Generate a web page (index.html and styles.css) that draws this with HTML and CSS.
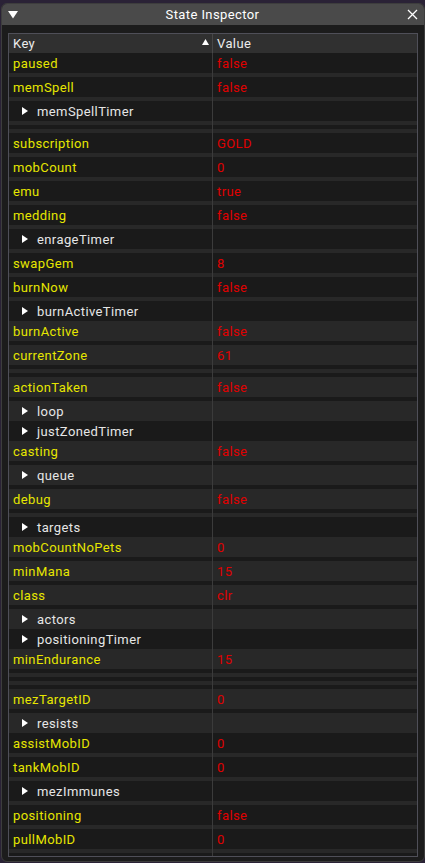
FILE: index.html
```html
<!DOCTYPE html>
<html>
<head>
<meta charset="utf-8">
<link rel="stylesheet" href="styles.css">
</head>
<body>
<div class="window">
  <div class="titlebar">
    <svg class="collapse" width="10" height="8" viewBox="0 0 10 8"><polygon points="0,0 10,0 5,7.5" fill="#ffffff"/></svg>
    <span class="title">State Inspector</span>
    <svg class="close" width="11" height="11" viewBox="0 0 11 11"><path d="M1 1 L10 10 M10 1 L1 10" stroke="#ffffff" stroke-width="1.3" fill="none"/></svg>
  </div>
  <div class="body">
    <div class="table">
      <div class="row head">
        <div class="cell key"><span>Key</span><svg class="sort" width="7" height="6" viewBox="0 0 7 6"><polygon points="3.5,0 7,6 0,6" fill="#ffffff"/></svg></div>
        <div class="cell val">Value</div>
      </div>

      <div class="row d"><div class="cell key k">paused</div><div class="cell val v">false</div></div>
      <div class="row l sp"><div class="cell key"></div><div class="cell val"></div></div>
      <div class="row d"><div class="cell key k">memSpell</div><div class="cell val v">false</div></div>
      <div class="row l sp"><div class="cell key"></div><div class="cell val"></div></div>
      <div class="row d"><div class="cell key t"><svg class="arrow" width="6" height="8" viewBox="0 0 6 8"><polygon points="0,0 6,4 0,8" fill="#ffffff"/></svg>memSpellTimer</div><div class="cell val"></div></div>
      <div class="row l sp"><div class="cell key"></div><div class="cell val"></div></div>
      <div class="row d sp"><div class="cell key"></div><div class="cell val"></div></div>
      <div class="row l sp"><div class="cell key"></div><div class="cell val"></div></div>
      <div class="row d"><div class="cell key k">subscription</div><div class="cell val v">GOLD</div></div>
      <div class="row l sp"><div class="cell key"></div><div class="cell val"></div></div>
      <div class="row d"><div class="cell key k">mobCount</div><div class="cell val v">0</div></div>
      <div class="row l sp"><div class="cell key"></div><div class="cell val"></div></div>
      <div class="row d"><div class="cell key k">emu</div><div class="cell val v">true</div></div>
      <div class="row l sp"><div class="cell key"></div><div class="cell val"></div></div>
      <div class="row d"><div class="cell key k">medding</div><div class="cell val v">false</div></div>
      <div class="row l sp"><div class="cell key"></div><div class="cell val"></div></div>
      <div class="row d"><div class="cell key t"><svg class="arrow" width="6" height="8" viewBox="0 0 6 8"><polygon points="0,0 6,4 0,8" fill="#ffffff"/></svg>enrageTimer</div><div class="cell val"></div></div>
      <div class="row l sp"><div class="cell key"></div><div class="cell val"></div></div>
      <div class="row d"><div class="cell key k">swapGem</div><div class="cell val v">8</div></div>
      <div class="row l sp"><div class="cell key"></div><div class="cell val"></div></div>
      <div class="row d"><div class="cell key k">burnNow</div><div class="cell val v">false</div></div>
      <div class="row l sp"><div class="cell key"></div><div class="cell val"></div></div>
      <div class="row d"><div class="cell key t"><svg class="arrow" width="6" height="8" viewBox="0 0 6 8"><polygon points="0,0 6,4 0,8" fill="#ffffff"/></svg>burnActiveTimer</div><div class="cell val"></div></div>
      <div class="row l"><div class="cell key k">burnActive</div><div class="cell val v">false</div></div>
      <div class="row d sp"><div class="cell key"></div><div class="cell val"></div></div>
      <div class="row l"><div class="cell key k">currentZone</div><div class="cell val v">61</div></div>
      <div class="row d sp"><div class="cell key"></div><div class="cell val"></div></div>
      <div class="row l sp"><div class="cell key"></div><div class="cell val"></div></div>
      <div class="row d sp"><div class="cell key"></div><div class="cell val"></div></div>
      <div class="row l"><div class="cell key k">actionTaken</div><div class="cell val v">false</div></div>
      <div class="row d sp"><div class="cell key"></div><div class="cell val"></div></div>
      <div class="row l"><div class="cell key t"><svg class="arrow" width="6" height="8" viewBox="0 0 6 8"><polygon points="0,0 6,4 0,8" fill="#ffffff"/></svg>loop</div><div class="cell val"></div></div>
      <div class="row d"><div class="cell key t"><svg class="arrow" width="6" height="8" viewBox="0 0 6 8"><polygon points="0,0 6,4 0,8" fill="#ffffff"/></svg>justZonedTimer</div><div class="cell val"></div></div>
      <div class="row l"><div class="cell key k">casting</div><div class="cell val v">false</div></div>
      <div class="row d sp"><div class="cell key"></div><div class="cell val"></div></div>
      <div class="row l"><div class="cell key t"><svg class="arrow" width="6" height="8" viewBox="0 0 6 8"><polygon points="0,0 6,4 0,8" fill="#ffffff"/></svg>queue</div><div class="cell val"></div></div>
      <div class="row d sp"><div class="cell key"></div><div class="cell val"></div></div>
      <div class="row l"><div class="cell key k">debug</div><div class="cell val v">false</div></div>
      <div class="row d sp"><div class="cell key"></div><div class="cell val"></div></div>
      <div class="row l sp"><div class="cell key"></div><div class="cell val"></div></div>
      <div class="row d"><div class="cell key t"><svg class="arrow" width="6" height="8" viewBox="0 0 6 8"><polygon points="0,0 6,4 0,8" fill="#ffffff"/></svg>targets</div><div class="cell val"></div></div>
      <div class="row l"><div class="cell key k">mobCountNoPets</div><div class="cell val v">0</div></div>
      <div class="row d sp"><div class="cell key"></div><div class="cell val"></div></div>
      <div class="row l"><div class="cell key k">minMana</div><div class="cell val v">15</div></div>
      <div class="row d sp"><div class="cell key"></div><div class="cell val"></div></div>
      <div class="row l"><div class="cell key k">class</div><div class="cell val v">clr</div></div>
      <div class="row d sp"><div class="cell key"></div><div class="cell val"></div></div>
      <div class="row l"><div class="cell key t"><svg class="arrow" width="6" height="8" viewBox="0 0 6 8"><polygon points="0,0 6,4 0,8" fill="#ffffff"/></svg>actors</div><div class="cell val"></div></div>
      <div class="row d"><div class="cell key t"><svg class="arrow" width="6" height="8" viewBox="0 0 6 8"><polygon points="0,0 6,4 0,8" fill="#ffffff"/></svg>positioningTimer</div><div class="cell val"></div></div>
      <div class="row l"><div class="cell key k">minEndurance</div><div class="cell val v">15</div></div>
      <div class="row d sp"><div class="cell key"></div><div class="cell val"></div></div>
      <div class="row l sp"><div class="cell key"></div><div class="cell val"></div></div>
      <div class="row d sp"><div class="cell key"></div><div class="cell val"></div></div>
      <div class="row l sp"><div class="cell key"></div><div class="cell val"></div></div>
      <div class="row d sp"><div class="cell key"></div><div class="cell val"></div></div>
      <div class="row l"><div class="cell key k">mezTargetID</div><div class="cell val v">0</div></div>
      <div class="row d sp"><div class="cell key"></div><div class="cell val"></div></div>
      <div class="row l"><div class="cell key t"><svg class="arrow" width="6" height="8" viewBox="0 0 6 8"><polygon points="0,0 6,4 0,8" fill="#ffffff"/></svg>resists</div><div class="cell val"></div></div>
      <div class="row d"><div class="cell key k">assistMobID</div><div class="cell val v">0</div></div>
      <div class="row l sp"><div class="cell key"></div><div class="cell val"></div></div>
      <div class="row d"><div class="cell key k">tankMobID</div><div class="cell val v">0</div></div>
      <div class="row l sp"><div class="cell key"></div><div class="cell val"></div></div>
      <div class="row d"><div class="cell key t"><svg class="arrow" width="6" height="8" viewBox="0 0 6 8"><polygon points="0,0 6,4 0,8" fill="#ffffff"/></svg>mezImmunes</div><div class="cell val"></div></div>
      <div class="row l sp"><div class="cell key"></div><div class="cell val"></div></div>
      <div class="row d"><div class="cell key k">positioning</div><div class="cell val v">false</div></div>
      <div class="row l sp"><div class="cell key"></div><div class="cell val"></div></div>
      <div class="row d"><div class="cell key k">pullMobID</div><div class="cell val v">0</div></div>
      <div class="row l sp"><div class="cell key"></div><div class="cell val"></div></div>
      <div class="row fill"><div class="cell key"></div><div class="cell val"></div></div>
    </div>
  </div>
</div>
</body>
</html>
```

FILE: styles.css
```css
html, body {
  margin: 0;
  padding: 0;
}
body {
  width: 425px;
  height: 863px;
  overflow: hidden;
  background: #2a2236;
  font-family: Roboto, "Liberation Sans", sans-serif;
  font-size: 13px;
  letter-spacing: 0.4px;
  color: #e8e8e8;
}
.window {
  box-sizing: border-box;
  margin: 3px 0 0 1px;
  width: 424px;
  height: 859px;
  border: 1px solid #3d3d3d;
  border-radius: 6px;
  background: #1c1c1c;
  display: flex;
  flex-direction: column;
  overflow: hidden;
}
.titlebar {
  height: 21px;
  flex: none;
  background: #4a4a4a;
  display: flex;
  align-items: center;
  padding: 0 6px 0 6px;
}
.collapse {
  flex: none;
  margin-top: 1px;
}
.title {
  flex: 1;
  text-align: center;
  color: #ffffff;
  line-height: 21px;
}
.close {
  flex: none;
}
.body {
  flex: 1;
  display: flex;
  flex-direction: column;
  padding: 8px 6px 4px 6px;
  min-height: 0;
}
.table {
  flex: 1;
  display: flex;
  flex-direction: column;
  border: 1px solid #4f4f58;
  background: #1a1a1a;
}
.row {
  display: grid;
  grid-template-columns: 204px 204px;
  height: 20px;
  flex: none;
}
.row.sp {
  height: 4px;
}
.row.fill {
  flex: 1;
  height: auto;
}
.row.d {
  background: #1a1a1a;
}
.row.l {
  background: #282828;
}
.row.head {
  height: 19px;
  background: #303030;
}
.cell {
  display: flex;
  align-items: center;
  padding-left: 4px;
  white-space: nowrap;
  overflow: hidden;
}
.cell.key {
  border-right: 1px solid #3b3b3b;
}
.head .cell.key {
  border-right-color: #474747;
  padding-right: 3px;
}
.head .cell {
  color: #ececec;
}
.head .cell span {
  flex: 1;
}
.sort {
  flex: none;
  margin-bottom: 3px;
}
.k {
  color: #e6e600;
}
.v {
  color: #e00000;
}
.t {
  color: #e6e6e6;
  padding-left: 13px;
}
.arrow {
  flex: none;
  margin-right: 9px;
}
```
